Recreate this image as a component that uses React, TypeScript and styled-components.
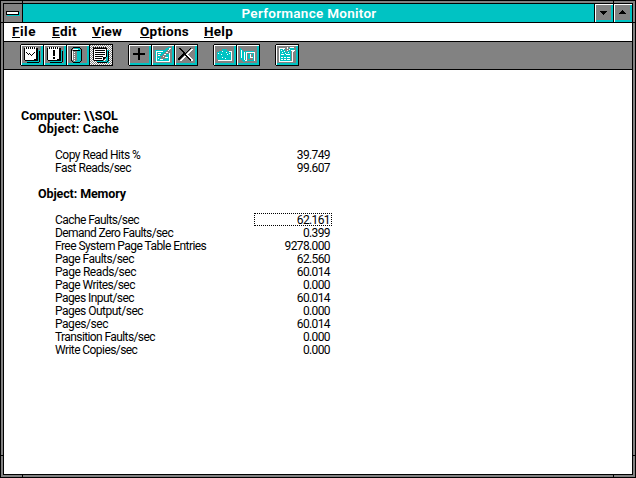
import React from "react";
import styled, { createGlobalStyle, css } from "styled-components";

const TEAL = "#00c3c3";
const GRAY = "#828282";

const GlobalStyle = createGlobalStyle`
  * { box-sizing: border-box; }
  body { margin: 0; background: #000; }
`;

const Window = styled.div`
  position: relative;
  width: 636px;
  height: 478px;
  padding: 2px;
  border: 1px solid #000;
  background: ${GRAY};
  color: #000;
  font-family: Roboto, "Liberation Sans", sans-serif;
  white-space: pre;
`;

const Frame = styled.div`
  display: flex;
  flex-direction: column;
  height: 472px;
  border: 1px solid #000;
  background: #fff;
`;

/* Short ticks marking the resize corners of the window border. */
const Notch = styled.i<{ $x: "left" | "right"; $y: "top" | "bottom"; $upright?: boolean }>`
  position: absolute;
  background: #000;
  ${({ $x, $y, $upright }) =>
    $upright
      ? css`
          ${$x}: 21px;
          ${$y}: 0;
          width: 1px;
          height: 3px;
        `
      : css`
          ${$x}: 0;
          ${$y}: 21px;
          width: 3px;
          height: 1px;
        `}
`;

const TitleBar = styled.header`
  display: flex;
  height: 19px;
  flex: none;
  border-bottom: 1px solid #000;
  background: ${TEAL};
`;

const SystemBox = styled.button`
  display: flex;
  width: 19px;
  padding: 0;
  border: 0;
  border-right: 1px solid #000;
  background: ${GRAY};
`;

const Title = styled.h1`
  flex: 1;
  margin: 0;
  padding-left: 1px;
  color: #fff;
  font-size: 13.5px;
  font-weight: 600;
  letter-spacing: 0.28px;
  line-height: 19px;
  text-align: center;
`;

const SizeButton = styled.button`
  display: flex;
  width: 19px;
  padding: 0;
  border: 0;
  border-left: 1px solid #000;
  background: ${GRAY};
  box-shadow: inset 1px 1px #fff, inset -2px -2px ${TEAL};
`;

const MenuBar = styled.nav`
  display: flex;
  height: 19px;
  flex: none;
  padding-left: 8px;
  border-bottom: 1px solid #000;
`;

const MenuItem = styled.span<{ $width: number; $spacing: number }>`
  width: ${(p) => p.$width}px;
  font-size: 13.5px;
  font-weight: 700;
  letter-spacing: ${(p) => p.$spacing}px;
  line-height: 17px;
  &::first-letter {
    text-decoration: underline;
    text-decoration-thickness: 1px;
    text-underline-offset: 1px;
  }
`;

const Toolbar = styled.div`
  display: flex;
  gap: 15px;
  height: 28px;
  flex: none;
  padding: 2px 0 0 16px;
  border-bottom: 1px solid #000;
  background: ${GRAY};
`;

const ToolGroup = styled.div`
  display: flex;
  height: 22px;
  padding-left: 1px;
  background: linear-gradient(#000, #000) 0 1px / 1px 20px no-repeat;
`;

const ToolButton = styled.button<{ $pressed?: boolean }>`
  width: 23px;
  height: 22px;
  padding: 0;
  border: solid #000;
  border-width: 1px 1px 1px 0;
  background: ${(p) =>
    p.$pressed ? `repeating-conic-gradient(#fff 0 25%, ${GRAY} 0 50%) 0 0 / 2px 2px` : GRAY};
  box-shadow: ${(p) =>
    p.$pressed ? "none" : `inset 1px 1px #fff, inset -2px -2px ${TEAL}`};
`;

const Glyph = styled.svg`
  display: block;
  shape-rendering: crispEdges;
`;

const Report = styled.main`
  flex: 1;
  padding: 39px 0 0 17px;
`;

const Heading = styled.h2<{ $indent?: number; $spacing: number }>`
  height: 13px;
  margin: 0 0 0 ${(p) => p.$indent ?? 0}px;
  font-size: 12.5px;
  font-weight: 700;
  letter-spacing: ${(p) => p.$spacing}px;
  line-height: 13px;
`;

const CounterList = styled.div`
  padding: 13px 0 13px 34px;
`;

const CounterRow = styled.div`
  display: grid;
  grid-template-columns: 199px 78px;
  height: 13px;
  font-size: 12px;
  line-height: 15px;
`;

const CounterName = styled.span<{ $spacing: number }>`
  letter-spacing: ${(p) => p.$spacing}px;
`;

const CounterValue = styled.span<{ $focused?: boolean }>`
  height: 13px;
  padding-right: ${(p) => (p.$focused ? 1 : 2)}px;
  border: ${(p) => (p.$focused ? "1px dotted #000" : "0")};
  letter-spacing: -0.62px;
  line-height: ${(p) => (p.$focused ? 13 : 15)}px;
  text-align: right;
`;

const PadBase = () => (
  <>
    <path fill={TEAL} d="M16 5h3v12h-13v-2h10z" />
    <path fill="#000" d="M3 3h14v13h-13v-1h-1zM18 6h1v11h-1zM6 17h12v1h-12z" />
    <path fill="#fff" d="M4 4h11v10h-2v1h-9z" />
    <path fill="#fff" d="M4 2h1v2h-1zM6 2h1v2h-1zM8 2h1v2h-1zM10 2h1v2h-1zM12 2h1v2h-1zM14 2h1v2h-1z" />
    <path fill="#000" d="M5 2h1v2h-1zM7 2h1v2h-1zM9 2h1v2h-1zM11 2h1v2h-1zM13 2h1v2h-1z" />
  </>
);

const ChartIcon = () => (
  <>
    <PadBase />
    <path fill="#000" d="M5 7h1v1h-1zM6 8h1v1h-1zM7 9h1v1h-1zM8 8h1v1h-1zM9 9h1v1h-1zM10 10h1v1h-1zM11 9h1v1h-1zM12 8h1v1h-1zM13 7h1v1h-1z" />
  </>
);

const AlertIcon = () => (
  <>
    <PadBase />
    <path fill="#000" d="M9 5h2v6h-2zM9 12h2v2h-2z" />
  </>
);

const LogIcon = () => (
  <>
    <path fill={TEAL} d="M10 5h4v12h-6v-1h2z" />
    <path fill={TEAL} d="M7 3h6v2h-6z" />
    <path fill="#000" d="M6 2h7v1h-7zM5 3h1v1h-1zM13 3h1v1h-1zM4 4h1v12h-1zM14 4h1v12h-1zM5 16h1v1h-1zM13 16h1v1h-1zM6 17h7v1h-7zM6 5h7v1h-7z" />
    <path fill="#fff" d="M6 4h5v1h-5zM5 6h1v9h-1zM7 7h1v1h-1zM7 9h1v1h-1zM7 11h1v1h-1zM7 13h1v1h-1zM7 15h1v1h-1z" />
  </>
);

const ReportIcon = () => (
  <>
    <path fill={TEAL} d="M16 5h3v13h-12v-2h9z" />
    <path fill="#000" d="M3 3h14v9h-1v1h-1v1h-1v1h-1v1h-9v-1h-1zM18 6h1v10h-1zM7 17h10v1h-10zM17 16h1v1h-1z" />
    <path fill="#fff" d="M4 4h12v8h-3v3h-9z" />
    <path fill="#000" d="M3 2h1v2h-1zM5 2h1v2h-1zM7 2h1v2h-1zM9 2h1v2h-1zM11 2h1v2h-1zM13 2h1v2h-1zM15 2h1v2h-1zM5 5h10v1h-10zM5 7h10v1h-10zM5 9h10v1h-10zM5 11h8v1h-8zM5 13h7v1h-7zM13 12h2v1h-2zM13 13h1v2h-1z" />
  </>
);

const AddIcon = () => <path fill="#000" d="M9 3h2v5h5v2h-5v5h-2v-5h-5v-2h5z" />;

const EditIcon = () => (
  <>
    <path fill="#fff" d="M4 6h9v1h-8v10h-1zM4 16h14v1h-14zM17 8h1v9h-1zM17 3h2v1h-1v1h-1v1h-1v-1h1z" />
    <path fill={TEAL} d="M3 5h10v1h-9v10h-1zM5 7h6v1h-6zM5 9h5v1h-5zM5 11h3v1h-3zM5 12h4v2h8v2h-12zM16 2h2v1h-1v1h-1v1h-1v1h-1v1h-1v1h-1v1h-1v1h-1v1h-2v-2h1v-1h1v-1h1v-1h1v-1h1v-1h1v-1h1zM14 9h3v5h-3z" />
    <path fill="#fff" d="M6 8h3v1h-3zM6 10h2v1h-2zM6 13h1v1h-1zM8 14h3v1h-3zM13 12h3v1h-3zM14 7h2v1h-2zM12 9h2v1h-2zM11 11h1v1h-1z" />
  </>
);

const DeleteIcon = () => (
  <>
    <path
      fill="#fff"
      d="M15 4h3v1h-1v1h-1v1h-1v1h-1v1h-1v1h1v1h1v1h1v1h1v1h1v2h-2v-1h-1v-1h-1v-1h-1v-1h-1v-1h-1v1h-1v1h-1v1h-1v1h-1v1h-2v-1h1v-1h1v-1h1v-1h1v-1h1v-1h1v-1h1v-1h1v-1h1v-1h1v-1h1z"
    />
    <path
      fill="#000"
      d="M4 3h2v1h1v1h1v1h1v1h1v1h1v-1h1v-1h1v-1h1v-1h1v-1h1v1h-1v1h-1v1h-1v1h-1v1h-1v2h1v1h1v1h1v1h1v1h1v2h-1v-1h-1v-1h-1v-1h-1v-1h-1v-1h-1v-1h-1v1h-1v1h-1v1h-1v1h-1v1h-2v-2h1v-1h1v-1h1v-1h1v-1h1v-2h-1v-1h-1v-1h-1v-1h-1v-1h-1z"
    />
  </>
);

const SnapshotIcon = () => (
  <>
    <path fill="#fff" d="M5 6h3v-1h5v1h5v10h-14v-1h13v-8h-12z" />
    <path fill={TEAL} d="M3 7h2v-1h3v-2h5v2h2v1h2v8h-13v-1h-1z" />
    <path fill="#fff" d="M4 8h1v1h-1zM8 6h1v1h-1zM7 9h1v1h-1zM12 7h1v1h-1zM13 9h1v1h-1zM8 12h1v1h-1zM11 13h1v1h-1zM15 8h1v1h-1z" />
  </>
);

const BookmarkIcon = () => (
  <>
    <path fill="#fff" d="M4 4h1v1h1v1h1v1h1v8h10v1h-12v-1h-1v-1h-1zM9 7h9v9h-1v-8h-7v7h-1z" />
    <path fill={TEAL} d="M3 3h1v1h1v1h1v1h1v9h1v2h-2v-1h-1v-1h-1v-1h-1zM8 6h9v1h-8v8h-1zM16 8h1v8h-7v-1h6zM11 9h2v5h-2zM14 8h1v2h-1z" />
    <path fill="#fff" d="M13 9h1v3h2v1h-3zM4 5h1v8h-1z" />
  </>
);

const OptionsIcon = () => (
  <>
    <path fill="#fff" d="M3 3h6v1h-5v13h-1zM4 16h13v1h-13zM15 5h4v1h-1v1h-1v10h-1v-11h-1zM11 2h1v2h-1zM14 2h4v1h-4z" />
    <path fill={TEAL} d="M4 4h5v2h1v1h1v-1h2v-3h5v2h-3v11h-11z" />
    <path fill="#fff" d="M5 5h1v1h-1zM7 4h1v1h-1zM6 7h1v1h-1zM8 6h1v1h-1zM9 8h1v1h-1zM11 5h1v1h-1zM12 7h1v1h-1zM13 4h1v1h-1zM5 9h3v1h-3zM10 9h4v1h-4zM5 12h2v1h-2zM8 12h2v1h-2zM11 12h3v1h-3zM5 14h2v1h-2zM8 14h2v1h-2zM11 14h3v1h-3z" />
  </>
);

type Tool = { name: string; Icon: () => React.JSX.Element; pressed?: boolean };

const toolGroups: Tool[][] = [
  [
    { name: "Chart", Icon: ChartIcon },
    { name: "Alert", Icon: AlertIcon },
    { name: "Log", Icon: LogIcon },
    { name: "Report", Icon: ReportIcon, pressed: true },
  ],
  [
    { name: "Add", Icon: AddIcon },
    { name: "Edit", Icon: EditIcon },
    { name: "Delete", Icon: DeleteIcon },
  ],
  [
    { name: "Snapshot", Icon: SnapshotIcon },
    { name: "Bookmark", Icon: BookmarkIcon },
  ],
  [{ name: "Options", Icon: OptionsIcon }],
];

const menus = [
  { label: "File", width: 40, spacing: 0.54 },
  { label: "Edit", width: 40, spacing: 0.45 },
  { label: "View", width: 48, spacing: 0.1 },
  { label: "Options", width: 64, spacing: 0.26 },
  { label: "Help", width: 40, spacing: 0.25 },
];

type Counter = { name: string; value: string; spacing: number; focused?: boolean };

const cache: Counter[] = [
  { name: "Copy Read Hits %", value: "39.749", spacing: -0.5 },
  { name: "Fast Reads/sec", value: "99.607", spacing: -0.51 },
];

const memory: Counter[] = [
  { name: "Cache Faults/sec", value: "62.161", spacing: -0.56, focused: true },
  { name: "Demand Zero Faults/sec", value: "0.399", spacing: -0.6 },
  { name: "Free System Page Table Entries", value: "9278.000", spacing: -0.55 },
  { name: "Page Faults/sec", value: "62.560", spacing: -0.5 },
  { name: "Page Reads/sec", value: "60.014", spacing: -0.44 },
  { name: "Page Writes/sec", value: "0.000", spacing: -0.53 },
  { name: "Pages Input/sec", value: "60.014", spacing: -0.55 },
  { name: "Pages Output/sec", value: "0.000", spacing: -0.51 },
  { name: "Pages/sec", value: "60.014", spacing: -0.46 },
  { name: "Transition Faults/sec", value: "0.000", spacing: -0.6 },
  { name: "Write Copies/sec", value: "0.000", spacing: -0.57 },
];

const Counters = ({ items }: { items: Counter[] }) => (
  <CounterList>
    {items.map((c) => (
      <CounterRow key={c.name}>
        <CounterName $spacing={c.spacing}>{c.name}</CounterName>
        <CounterValue $focused={c.focused}>{c.value}</CounterValue>
      </CounterRow>
    ))}
  </CounterList>
);

export default function App() {
  return (
    <>
      <GlobalStyle />
      <Window>
        <Frame>
          <TitleBar>
            <SystemBox aria-label="System menu">
              <Glyph width="18" height="18">
                <path fill="#000" d="M2 7h13v4h-13z" />
                <path fill="#fff" d="M3 8h11v2h-11z" />
                <path fill={TEAL} d="M15 8h1v4h-13v-1h12z" />
              </Glyph>
            </SystemBox>
            <Title>Performance Monitor</Title>
            <SizeButton aria-label="Minimize">
              <Glyph width="18" height="18">
                <path d="M5 7h7v1h-1v1h-1v1h-1v1h-1v-1h-1v-1h-1v-1h-1z" />
              </Glyph>
            </SizeButton>
            <SizeButton aria-label="Maximize">
              <Glyph width="18" height="18">
                <path d="M8 6h1v1h1v1h1v1h1v1h-7v-1h1v-1h1v-1h1z" />
              </Glyph>
            </SizeButton>
          </TitleBar>
          <MenuBar>
            {menus.map((m) => (
              <MenuItem key={m.label} $width={m.width} $spacing={m.spacing}>
                {m.label}
              </MenuItem>
            ))}
          </MenuBar>
          <Toolbar>
            {toolGroups.map((group, i) => (
              <ToolGroup key={i}>
                {group.map(({ name, Icon, pressed }) => (
                  <ToolButton key={name} aria-label={name} $pressed={pressed}>
                    <Glyph width="22" height="20">
                      <Icon />
                    </Glyph>
                  </ToolButton>
                ))}
              </ToolGroup>
            ))}
          </Toolbar>
          <Report>
            <Heading $spacing={0.07}>{"Computer: \\\\SOL"}</Heading>
            <Heading $indent={17} $spacing={0.22}>Object: Cache</Heading>
            <Counters items={cache} />
            <Heading $indent={17} $spacing={-0.11}>Object: Memory</Heading>
            <Counters items={memory} />
          </Report>
        </Frame>
        <Notch $x="left" $y="top" />
        <Notch $x="left" $y="top" $upright />
        <Notch $x="right" $y="top" />
        <Notch $x="right" $y="top" $upright />
        <Notch $x="left" $y="bottom" />
        <Notch $x="left" $y="bottom" $upright />
        <Notch $x="right" $y="bottom" />
        <Notch $x="right" $y="bottom" $upright />
      </Window>
    </>
  );
}
